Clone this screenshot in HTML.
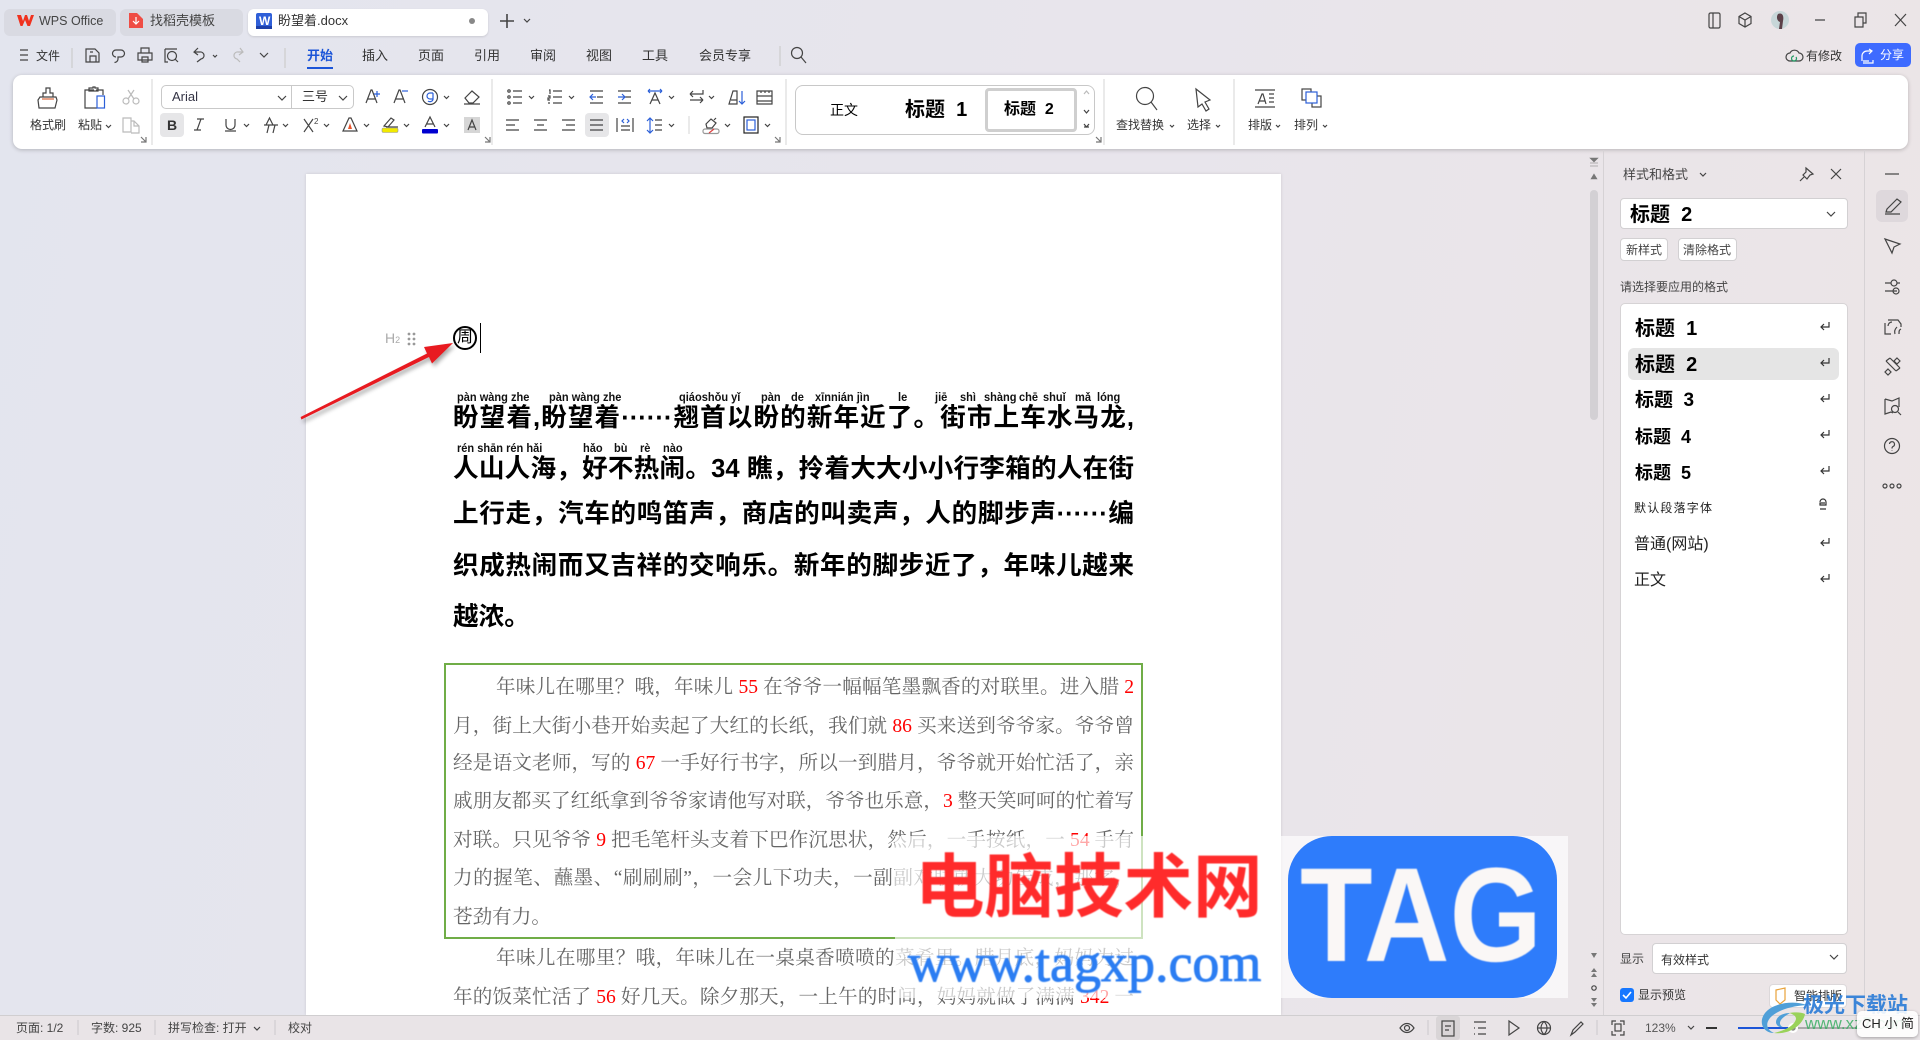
<!DOCTYPE html>
<html lang="zh-CN"><head><meta charset="utf-8"><title>盼望着.docx - WPS Office</title>
<style>
html,body{margin:0;padding:0;width:1920px;height:1040px;overflow:hidden}
body{position:relative;background:linear-gradient(100deg,#e3e5ee 0%,#e8e5ec 55%,#ece5e6 100%);font-family:"Liberation Sans","Noto Sans CJK SC",sans-serif;color:#333;font-size:12px}
.t{position:absolute;white-space:nowrap;line-height:20px}
.b{position:absolute;box-sizing:border-box}
.tab{position:absolute;top:9px;height:27px;border-radius:6px;background:#d9dae2}
.m{font-size:13px;top:46px;color:#333}
.l{top:115px;color:#333}
.h{font-family:"Liberation Sans","Noto Sans CJK SC",sans-serif;font-weight:700;color:#000}
.j{position:absolute;left:453px;width:681px;text-align:justify;text-align-last:justify;white-space:nowrap;font-weight:700;color:#000;font-size:25.6px;line-height:40px;height:40px;font-family:"Liberation Sans","Noto Sans CJK SC",sans-serif}
.s{position:absolute;left:453px;width:681px;text-align:justify;text-align-last:justify;white-space:nowrap;color:#666;font-size:19.6px;line-height:30px;height:30px;font-family:"Liberation Serif","Noto Serif CJK SC",serif}
.s i{font-style:normal;color:#f00}
.p{position:absolute;font-size:11.5px;font-weight:700;color:#111;line-height:14px;white-space:nowrap;font-family:"Liberation Sans",sans-serif;transform:scaleX(.96);transform-origin:left}
.st{top:1018px;color:#444;font-size:12px}
svg{position:absolute;left:0;top:0}
</style></head><body>

<!-- title tabs -->
<div class="tab" style="left:4px;width:112px"></div>
<div class="tab" style="left:120px;width:123px"></div>
<div class="tab" style="left:248px;width:240px;background:#fff;box-shadow:0 1px 2px rgba(0,0,0,.12)"></div>
<div class="t" style="left:39px;top:11px;font-size:12.5px;color:#444">WPS Office</div>
<div class="t" style="left:150px;top:11px;font-size:13px;color:#444">找稻壳模板</div>
<div class="t" style="left:278px;top:11px;font-size:13px;color:#333">盼望着.docx</div>

<!-- menu -->
<div class="t m" style="left:36px;font-size:12px">文件</div>
<div class="t m" style="left:307px;color:#1c55d8;font-weight:700">开始</div>
<div class="b" style="left:307px;top:67px;width:26px;height:2px;background:#1c55d8"></div>
<div class="t m" style="left:362px">插入</div>
<div class="t m" style="left:418px">页面</div>
<div class="t m" style="left:474px">引用</div>
<div class="t m" style="left:530px">审阅</div>
<div class="t m" style="left:586px">视图</div>
<div class="t m" style="left:642px">工具</div>
<div class="t m" style="left:699px">会员专享</div>
<div class="t" style="left:1806px;top:46px;font-size:12px">有修改</div>
<div class="b" style="left:1855px;top:43px;width:56px;height:24px;background:#3e6bff;border-radius:5px"></div>
<div class="t" style="left:1880px;top:45px;font-size:12px;color:#fff">分享</div>

<!-- ribbon -->
<div class="b" style="left:13px;top:75px;width:1895px;height:74px;background:#fff;border-radius:9px;box-shadow:0 1px 4px rgba(0,0,0,.22)"></div>
<div class="t l" style="left:30px;font-size:12px">格式刷</div>
<div class="t l" style="left:78px">粘贴</div>
<div class="b" style="left:161px;top:85px;width:193px;height:24px;border:1px solid #c9c9c9;border-radius:5px"></div>
<div class="b" style="left:291px;top:85px;width:1px;height:24px;background:#c9c9c9"></div>
<div class="t" style="left:172px;top:87px;color:#334;font-size:13px">Arial</div>
<div class="t" style="left:302px;top:87px;color:#333;font-size:13px">三号</div>
<div class="b" style="left:160px;top:113px;width:24px;height:24px;background:#e6e6e8;border-radius:4px"></div>
<div class="t" style="left:167px;top:115px;font-weight:700;font-size:14px">B</div>
<div class="b" style="left:585px;top:113px;width:24px;height:24px;background:#e6e6e8;border-radius:4px"></div>

<!-- gallery -->
<div class="b" style="left:795px;top:85px;width:300px;height:50px;border:1px solid #c8c8c8;border-radius:8px"></div>
<div class="b" style="left:985px;top:88px;width:92px;height:44px;border:3px solid #cfcfcf;border-radius:4px"></div>
<div class="t" style="left:830px;top:100px;font-size:14px;color:#000">正文</div>
<div class="t h" style="left:905px;top:100px;font-size:20px">标题&nbsp;&nbsp;1</div>
<div class="t h" style="left:1004px;top:100px;font-size:16px">标题&nbsp;&nbsp;2</div>
<div class="t l" style="left:1116px">查找替换</div>
<div class="t l" style="left:1187px">选择</div>
<div class="t l" style="left:1248px">排版</div>
<div class="t l" style="left:1294px">排列</div>

<!-- page -->
<div class="b" style="left:306px;top:174px;width:975px;height:841px;background:#fff;box-shadow:0 0 3px rgba(0,0,0,.12)"></div>
<div class="t" style="left:385px;top:328px;font-size:14px;color:#aaa">H<span style="font-size:9px">2</span></div>
<svg width="1920" height="1040" viewBox="0 0 1920 1040" fill="#999"><circle cx="409" cy="334" r="1.400"/><circle cx="414" cy="334" r="1.400"/><circle cx="409" cy="339" r="1.400"/><circle cx="414" cy="339" r="1.400"/><circle cx="409" cy="344" r="1.400"/><circle cx="414" cy="344" r="1.400"/></svg>

<div class="b" style="left:453px;top:326px;width:24px;height:24px;border:2px solid #000;border-radius:50%"></div>
<div class="t h" style="left:457px;top:328px;font-size:16px;line-height:20px;font-weight:400">周</div>
<div class="b" style="left:480px;top:323px;width:1px;height:30px;background:#000"></div>

<div class="p" style="left:457px;top:391px">pàn wàng zhe</div>
<div class="p" style="left:549px;top:391px">pàn wàng zhe</div>
<div class="p" style="left:679px;top:391px">qiáoshǒu yǐ</div>
<div class="p" style="left:761px;top:391px">pàn</div>
<div class="p" style="left:791px;top:391px">de</div>
<div class="p" style="left:815px;top:391px">xīnnián jìn</div>
<div class="p" style="left:898px;top:391px">le</div>
<div class="p" style="left:935px;top:391px">jiē</div>
<div class="p" style="left:960px;top:391px">shì</div>
<div class="p" style="left:984px;top:391px">shàng</div>
<div class="p" style="left:1019px;top:391px">chē</div>
<div class="p" style="left:1043px;top:391px">shuǐ</div>
<div class="p" style="left:1075px;top:391px">mǎ</div>
<div class="p" style="left:1097px;top:391px">lóng</div>
<div class="p" style="left:457px;top:442px">rén shān rén hǎi</div>
<div class="p" style="left:583px;top:442px">hǎo</div>
<div class="p" style="left:614px;top:442px">bù</div>
<div class="p" style="left:640px;top:442px">rè</div>
<div class="p" style="left:663px;top:442px">nào</div>

<div class="j" style="top:398px">盼望着,盼望着······翘首以盼的新年近了。街市上车水马龙,</div>
<div class="j" style="top:449px">人山人海，好不热闹。34 瞧，拎着大大小小行李箱的人在街</div>
<div class="j" style="top:494px">上行走，汽车的鸣笛声，商店的叫卖声，人的脚步声······编</div>
<div class="j" style="top:546px">织成热闹而又吉祥的交响乐。新年的脚步近了，年味儿越来</div>
<div class="j" style="top:597px;width:auto;text-align-last:left">越浓。</div>

<div class="b" style="left:444px;top:663px;width:699px;height:276px;border:2px solid #70ad47"></div>
<div class="s" style="top:673px;left:496px;width:638px">年味儿在哪里？哦，年味儿 <i>55</i> 在爷爷一幅幅笔墨飘香的对联里。进入腊 <i>2</i></div>
<div class="s" style="top:712px">月，街上大街小巷开始卖起了大红的长纸，我们就 <i>86</i> 买来送到爷爷家。爷爷曾</div>
<div class="s" style="top:749px">经是语文老师，写的 <i>67</i> 一手好行书字，所以一到腊月，爷爷就开始忙活了，亲</div>
<div class="s" style="top:787px">戚朋友都买了红纸拿到爷爷家请他写对联，爷爷也乐意，<i>3</i> 整天笑呵呵的忙着写</div>
<div class="s" style="top:826px">对联。只见爷爷 <i>9</i> 把毛笔杆头支着下巴作沉思状，然后，一手按纸，一 <i>54</i> 手有</div>
<div class="s" style="top:864px">力的握笔、蘸墨、“刷刷刷”，一会儿下功夫，一副副对联就大功告成，那字，</div>
<div class="s" style="top:903px;width:auto;text-align-last:left">苍劲有力。</div>
<div class="s" style="top:944px;left:496px;width:638px">年味儿在哪里？哦，年味儿在一桌桌香喷喷的菜肴里。腊月底，妈妈为过</div>
<div class="s" style="top:983px">年的饭菜忙活了 <i>56</i> 好几天。除夕那天，一上午的时间，妈妈就做了满满 <i>342</i> 一</div>

<!-- status bar -->
<div class="b" style="left:0;top:1015px;width:1920px;height:25px;background:#e9e4e7;border-top:1px solid #d0ced0"></div>
<div class="t st" style="left:16px">页面: 1/2</div>
<div class="t st" style="left:91px">字数: 925</div>
<div class="t st" style="left:168px">拼写检查: 打开</div>
<div class="t st" style="left:288px">校对</div>
<div class="t st" style="left:1645px;color:#555">123%</div>
<div class="b" style="left:1436px;top:1016px;width:24px;height:24px;background:#d9d5d7;border-radius:3px"></div>

<!-- side panel -->
<div class="b" style="left:1603px;top:150px;width:1px;height:865px;background:#d6d2d5"></div>
<div class="b" style="left:1864px;top:150px;width:1px;height:865px;background:#d6d2d5"></div>
<div class="b" style="left:1590px;top:190px;width:8px;height:230px;background:#d3d0d4;border-radius:4px"></div>
<div class="t" style="left:1623px;top:165px;font-size:13px;color:#444">样式和格式</div>
<div class="b" style="left:1620px;top:198px;width:228px;height:31px;background:#fff;border:1px solid #d2d0d2;border-radius:4px"></div>
<div class="t h" style="left:1630px;top:205px;font-size:20px">标题&nbsp; 2</div>
<div class="b" style="left:1620px;top:238px;width:48px;height:23px;background:#fff;border:1px solid #d2d0d2;border-radius:4px"></div>
<div class="t" style="left:1626px;top:240px;color:#444">新样式</div>
<div class="b" style="left:1678px;top:238px;width:59px;height:23px;background:#fff;border:1px solid #d2d0d2;border-radius:4px"></div>
<div class="t" style="left:1683px;top:240px;color:#444">清除格式</div>
<div class="t" style="left:1620px;top:277px;color:#444">请选择要应用的格式</div>
<div class="b" style="left:1620px;top:303px;width:228px;height:632px;background:#fff;border:1px solid #d6d3d5;border-radius:5px"></div>
<div class="b" style="left:1628px;top:348px;width:211px;height:32px;background:#e5e5e5;border-radius:6px"></div>
<div class="t h" style="left:1635px;top:319px;font-size:20px">标题&nbsp; 1</div>
<div class="t h" style="left:1635px;top:355px;font-size:20px">标题&nbsp; 2</div>
<div class="t h" style="left:1635px;top:391px;font-size:19px">标题&nbsp; 3</div>
<div class="t h" style="left:1635px;top:427px;font-size:18px">标题&nbsp; 4</div>
<div class="t h" style="left:1635px;top:463px;font-size:18px">标题&nbsp; 5</div>
<div class="t" style="left:1634px;top:498px;font-size:12px;letter-spacing:1.2px;color:#222">默认段落字体</div>
<div class="t" style="left:1634px;top:535px;font-size:16px;color:#222">普通(网站)</div>
<div class="t" style="left:1634px;top:571px;font-size:16px;color:#222">正文</div>
<div class="t" style="left:1620px;top:949px;color:#444">显示</div>
<div class="b" style="left:1652px;top:943px;width:195px;height:31px;background:#fff;border:1px solid #d2d0d2;border-radius:4px"></div>
<div class="t" style="left:1661px;top:950px;color:#333">有效样式</div>
<div class="b" style="left:1620px;top:988px;width:14px;height:14px;background:#1677ff;border-radius:3px"></div>
<div class="t" style="left:1638px;top:985px;color:#333">显示预览</div>
<div class="b" style="left:1769px;top:984px;width:78px;height:24px;background:#fff;border:1px solid #dcd8da;border-radius:4px"></div>
<div class="t" style="left:1794px;top:986px;color:#333">智能排版</div>

<!-- icons -->
<svg width="1920" height="1040" viewBox="0 0 1920 1040" fill="none" stroke="#444" stroke-width="1.2">
<!-- tab icons -->
<path d="M17 15h4l2 6 2-6h2l2 6 2-6h3l-4 11h-2.500l-2.500-6-2.500 6h-2z" fill="#f0321f" stroke="none"/>
<path d="M129 13h8l6 6v9h-14z" fill="#ef4d45" stroke="none"/><path d="M136 17v7m-3-3l3 3 3-3" stroke="#fff"/>
<rect x="256" y="13" width="16" height="16" rx="2" fill="#2f5fd8" stroke="none"/><text x="259" y="25" font-size="12" font-weight="700" fill="#fff" stroke="none" font-family="Liberation Sans">W</text>
<rect x="256" y="26" width="16" height="3" fill="#1c3fa8" stroke="none"/>
<circle cx="472" cy="21" r="3" fill="#888" stroke="none"/>
<path d="M500 21h14M507 14v14" stroke="#444" stroke-width="1.6"/><path d="M524 19l3 3 3-3"/>
<!-- window controls -->
<rect x="1709" y="13" width="11" height="15" rx="1.5"/><path d="M1713 13v15"/>
<path d="M1745 13l6 3.500v7l-6 3.500-6-3.500v-7zM1739 16.500l6 3.500 6-3.500M1745 20v7"/>
<circle cx="1780" cy="20" r="9" fill="#c7d6d8" stroke="none"/><path d="M1778 14c5-2 6 3 5 7l-1 8h-3l1-7c-3-1-4-5-2-8z" fill="#5b4048" stroke="none"/>
<path d="M1815 20h10M1855 17h8v10h-8zM1858 17v-4h8v10h-3M1895 14l11 12M1906 14l-11 12"/>
<!-- menu icons -->
<path d="M20 50h8M20 55h8M20 60h8"/><path d="M72 48v20M285 48v20M780 46v20" stroke="#ccc"/>
<path d="M86 49h9l4 4v9H86zM90 62v-6h6v6M90 52h3"/>
<path d="M116 57a3.500 3.500 0 0 1 0-7h5a3.500 3.500 0 0 1 0 7h-3v2a3.500 3.500 0 0 1-3.500 3.500"/>
<path d="M141 53v-5h8v5M138 53h14v7h-14zM142 57h6v5h-6z"/>
<path d="M165 49h12M165 49v13h3"/><circle cx="172" cy="56" r="4.500"/><path d="M175 59l3 3"/>
<path d="M198 48l-4 4 4 3M194 52h6a3.500 3.500 0 0 1 1 7l-4 3"/><path d="M213 55l2 2 2-2"/>
<g stroke="#bbb"><path d="M240 48l3 4-4 3M243 52h-5a3.500 3.500 0 0 0-1 7l3 3"/></g><path d="M260 53l4 4 4-4"/>
<circle cx="797" cy="53" r="5.500"/><path d="M801 57l5 6"/>
<path d="M1790 61a4 4 0 0 1 0-8 5 5 0 0 1 9 0 4 4 0 0 1 0 8z"/><path d="M1794 56a2.500 2.500 0 1 0 2 1" stroke="#1f9a62"/>
<path d="M1863 61h6M1862 61v-5a5 5 0 0 1 5-5h5M1869 49l3 2-3 3M1873 60v3h-10" stroke="#fff"/>
<!-- ribbon separators -->
<path d="M152 79v66M492 79v66M786 79v66M1104 79v66M1234 79v66M689 116v18" stroke="#dcdcdc"/>
<!-- format painter -->
<path d="M43 97v-4h3v-5h4v5h3v4M40 97h16l1 3-2 8H39l-1-8z"/><path d="M42 99h12" stroke="#d9663c"/>
<!-- paste -->
<path d="M94 90h-9v18h12M96 90h7v5M89 90v-2h4v-1h2v1h3v3h-9z"/><rect x="97" y="96" width="7.500" height="12" stroke="#2b5fd8"/>
<g stroke="#bbb"><circle cx="126" cy="101" r="3"/><circle cx="136" cy="101" r="3"/><path d="M128 99l6-9M134 99l-6-9"/></g>
<g stroke="#bbb"><path d="M123 118h8v14h-8zM131 121h3l5 5v7h-8M134 121v5h5"/></g>
<path d="M106 125l2.500 2.500 2.500-2.500"/>
<path d="M278 96l4 4 4-4M339 96l4 4 4-4"/>
<!-- font commands -->
<path d="M366 103l5-13h1l5 13M368 99h8"/><path d="M374 94h6M377 91v6" stroke="#2b5fd8"/>
<path d="M394 103l5-13h1l5 13M396 99h8"/><path d="M402 91h6" stroke="#2b5fd8"/>
<circle cx="430" cy="97" r="7.500"/><path d="M433 93h-3a3 3 0 0 0 0 6h3v-6M433 99c0 3-4 3-5 2" stroke="#2b5fd8"/>
<path d="M444 96l2.500 2.500 2.500-2.500M529 96l2.500 2.500 2.500-2.500M569 96l2.500 2.500 2.500-2.500M669 96l2.500 2.500 2.500-2.500M709 96l2.500 2.500 2.500-2.500"/>
<path d="M465 98l7-7 7 6-6 6h-4zM464 104h16"/>
<path d="M197 119h7M201 119l-4 11M194 130h7"/>
<path d="M226 119v6a4.500 4.500 0 0 0 9 0v-6M225 131h11"/><path d="M244 124l2.500 2.500 2.500-2.500M283 124l2.500 2.500 2.500-2.500M324 124l2.500 2.500 2.500-2.500M364 124l2.500 2.500 2.500-2.500M404 124l2.500 2.500 2.500-2.500M444 124l2.500 2.500 2.500-2.500M669 124l2.500 2.500 2.500-2.500M725 124l2.500 2.500 2.500-2.500M765 124l2.500 2.500 2.500-2.500"/>
<path d="M266 125l3.500-7 3.500 7M264 125h14M267 133l2-8M273 133l2-8"/>
<path d="M304 119l9 13M313 119l-9 13"/><text x="314" y="124" font-size="8" fill="#444" stroke="none" font-family="Liberation Sans">2</text>
<path d="M343 131l6-13h2l6 13zM346 131h8"/><path d="M348 129h4l-2-6z" fill="#e8552c" stroke="none"/>
<path d="M384 126l7-8 3 2-6 7zM386 127h12"/><rect x="382" y="128" width="16" height="4.500" rx="1.500" fill="#f2ea00" stroke="#999" stroke-width=".6"/>
<path d="M425 127l5-10 5 10M427 124h6"/><rect x="422" y="129" width="16" height="4.500" rx="1" fill="#0000d0" stroke="none"/>
<rect x="464" y="117" width="16" height="16" fill="#d6d6d6" stroke="none"/><path d="M468 130l4-10 4 10M469 127h6"/>
<!-- paragraph row1 -->
<circle cx="509" cy="91" r="1.200"/><circle cx="509" cy="97" r="1.200"/><circle cx="509" cy="103" r="1.200"/><path d="M513 91h9M513 97h9M513 103h9"/>
<path d="M549 90h1v4M548 96h2v2h-2v2h2M548 103h2M553 91h9M553 97h9M553 103h9"/>
<path d="M590 91h13M597 97h6M590 103h13"/><path d="M596 97h-6m3-3l-3 3 3 3" stroke="#2b5fd8"/>
<path d="M618 91h13M625 97h6M618 103h13"/><path d="M618 97h7m-3-3l3 3-3 3" stroke="#2b5fd8"/>
<path d="M650 104l5-11 5 11M652 100h6"/><path d="M648 91h14M648 91l2-2M648 91l2 2M662 91l-2-2M662 91l-2 2" stroke="#2b5fd8"/>
<path d="M690 94h13v-4M690 94l3-3M690 94l3 3M703 100h-13M703 100l-3-3M703 100l-3 3"/>
<path d="M729 104l4-13h4v13zM731 100h6M729 104h8"/><path d="M742 91v13m-3-3l3 3 3-3" stroke="#2b5fd8"/>
<path d="M757 91h15v13h-15zM757 96h15M757 101h15M761 91v2M765 91v2M769 91v2"/>
<!-- paragraph row2 -->
<path d="M506 120h13M506 125h9M506 130h13"/><path d="M534 120h13M537 125h7M534 130h13"/><path d="M562 120h13M566 125h9M562 130h13"/><path d="M590 120h13M590 125h13M590 130h13"/>
<path d="M617 118v14M633 118v14M621 126h9M621 130h9"/><path d="M624 119l-2 2 2 2M627 119l2 2-2 2" stroke="#2b5fd8"/>
<path d="M650 118v15m-3-12l3-3 3 3m-6 9l3 3 3-3" stroke="#2b5fd8"/><path d="M655 120h7M655 125h7M655 130h7"/>
<path d="M706 124l5-5 5 4-4 5h-5zM714 120l2-2"/><rect x="703" y="129" width="16" height="4.500" rx="2" stroke="#999"/><path d="M709 133l5-4" stroke="#d44"/>
<rect x="744" y="117" width="14" height="16" stroke="#222"/><rect x="747" y="120" width="8" height="10" stroke="#2b5fd8"/>
<g stroke="#777"><path d="M141 142h5v-5M141 137l5 5M485 142h5v-5M485 137l5 5M775 142h5v-5M775 137l5 5M1096 142h5v-5M1096 137l5 5"/></g>
<!-- gallery arrows -->
<path d="M1084 94l2.500-3 2.500 3" stroke="#bbb"/><path d="M1084 110l2.500 3 2.500-3M1084 124l2.500 3 2.500-3M1084 127h5"/>
<!-- right ribbon -->
<circle cx="1145" cy="96" r="8.500"/><path d="M1151 102l6 8"/>
<path d="M1196 89l14 11-5 2 4 7-3 2-4-7-4 3z"/>
<path d="M1170 125l2 2 2-2M1216 125l2 2 2-2M1276 125l2 2 2-2M1323 125l2 2 2-2"/>
<path d="M1255 90h20M1255 107h20M1258 104l4-10h1l3 10M1259 101h6M1269 94h5M1269 98h5M1269 102h5"/>
<rect x="1302" y="89" width="9" height="11"/><rect x="1312" y="96" width="9" height="11"/><rect x="1306" y="92" width="11" height="11" stroke="#2b5fd8" fill="#fff"/>
<!-- scroll controls -->
<path d="M1590 158h8l-4 4zM1590 163h8M1590 166h8M1594 174l3 5h-6z" fill="#777" stroke="#777" stroke-width=".6"/>
<path d="M1591 953h6l-3 5zM1594 968l3 4h-6zM1594 973l3 4h-6zM1591 998h6l-3 4zM1591 1003h6l-3 4z" fill="#777" stroke="none"/>
<circle cx="1594" cy="988" r="2.200"/>
<!-- panel icons -->
<path d="M1700 173l3 3 3-3"/>
<path d="M1806 168l7 6-3 1-3 4-4-4 3-3zM1804 177l-4 4"/>
<path d="M1831 169l10 10M1841 169l-10 10"/>
<path d="M1827 212l4 4 4-4"/>
<g stroke="#333"><path d="M1829 322v5h-8m3-3l-3 3 3 3M1829 358v5h-8m3-3l-3 3 3 3M1829 394v5h-8m3-3l-3 3 3 3M1829 430v5h-8m3-3l-3 3 3 3M1829 466v5h-8m3-3l-3 3 3 3M1829 538v5h-8m3-3l-3 3 3 3M1829 574v5h-8m3-3l-3 3 3 3"/><path d="M1820 502a3 3 0 0 1 6 0v3h-6v-2h5M1820 509h6"/></g>
<path d="M1830 955l4 4 4-4"/>
<path d="M1623 995l3 3 5-6" stroke="#fff" stroke-width="1.600"/>
<path d="M1776 990l9-2v12l-5 4-4-4z" stroke="#e9a23a"/>
<!-- right strip -->
<rect x="1876" y="190" width="32" height="32" rx="6" fill="#ded8dc" stroke="none"/>
<path d="M1885 174h14"/><path d="M1887 209l10-10 4 3-10 10h-5zM1885 214h15"/>
<path d="M1885 239l15 5-6 3-2 6z"/>
<path d="M1885 283h6M1897 283h3M1885 291h12"/><circle cx="1894" cy="283" r="3"/><circle cx="1896" cy="291" r="3"/>
<path d="M1888 320h10l3 4v3M1885 323v11h6M1892 322a4 4 0 0 0-4 4M1895 334c-1-3 0-5 2-7M1899 334c0-3 0-4 2-5"/>
<path d="M1886 361l10 10M1890 358l10 10M1886 361l4-3M1896 371l4-3M1897 358l3 3-3 3-3-3zM1888 369l3 3-3 3-3-3z"/>
<path d="M1885 399l7 2 7-3v9M1885 399v15l6-2 2 1"/><circle cx="1895" cy="409" r="3.500"/><path d="M1898 412l3 3"/>
<circle cx="1892" cy="446" r="7.500"/><path d="M1889.500 444a2.500 2.500 0 1 1 3.500 2.500c-1 .5-1 1-1 2M1892 450.500v.5"/>
<circle cx="1885" cy="486" r="2"/><circle cx="1892" cy="486" r="2"/><circle cx="1899" cy="486" r="2"/>
<!-- status icons -->
<path d="M78 1020v15M155 1020v15M275 1020v15M1428 1020v15M1597 1020v15" stroke="#d0cdd0"/>
<path d="M254 1027l3 3 3-3M1688 1026l3 3 3-3"/>
<path d="M1400 1028c4-6 10-6 14 0-4 6-10 6-14 0z"/><circle cx="1407" cy="1028" r="2.500"/>
<rect x="1442" y="1021" width="12" height="15"/><path d="M1445 1026h6M1445 1030h4"/>
<path d="M1474 1022h12M1478 1028h8M1478 1034h8M1474 1028h1M1474 1034h1"/>
<path d="M1509 1021l10 7-10 7z"/><circle cx="1544" cy="1028" r="6.500"/><path d="M1537.500 1028h13M1544 1021.500c-4 4-4 9 0 13M1544 1021.500c4 4 4 9 0 13"/>
<path d="M1571 1035l2-5 8-8 2 2-8 8z"/>
<path d="M1612 1025v-4h4M1620 1021h4v4M1624 1031v4h-4M1616 1035h-4v-4"/><rect x="1615" y="1024" width="6" height="7"/>
<path d="M1706 1028h11" stroke="#333" stroke-width="2"/><path d="M1738 1028h52" stroke="#1c55d8" stroke-width="2"/><path d="M1798 1028h60" stroke="#aaa" stroke-width="2"/>
<circle cx="1793" cy="1028" r="5" fill="#fff" stroke="none"/><circle cx="1793" cy="1028" r="2.700" fill="#888" stroke="none"/>
</svg>

<!-- arrow -->
<svg width="1920" height="1040" viewBox="0 0 1920 1040" style="filter:drop-shadow(2px 3px 2px rgba(0,0,0,.35))">
<path d="M300.600 417L427 353.500L424 347L453 343L432 363.500L429 357L301.400 419.500z" fill="#e81a20"/>
</svg>

<!-- watermark -->
<div class="b" style="left:895px;top:836px;width:673px;height:162px;background:rgba(255,255,255,.66)"></div>
<div class="t" style="left:915px;top:845px;font-size:69.500px;line-height:74px;font-weight:700;color:#ff2b2b;filter:blur(.5px);font-family:'Noto Sans CJK SC',sans-serif">电脑技术网</div>
<div class="t" style="left:908px;top:934px;font-size:54px;line-height:58px;color:#2b7df2;-webkit-text-stroke:.9px #2b7df2;filter:blur(.5px);font-family:'Liberation Serif',serif">www.tagxp.com</div>
<div class="b" style="left:1288px;top:836px;width:269px;height:162px;background:#2e7cfb;border-radius:44px"></div>
<svg width="1920" height="1040" viewBox="0 0 1920 1040"><text x="1300" y="961" font-size="134" font-weight="700" font-family="Liberation Sans,sans-serif" fill="#faf7f6" textLength="242" lengthAdjust="spacingAndGlyphs" style="filter:blur(.5px)">TAG</text></svg>

<!-- corner watermark -->
<svg width="1920" height="1040" viewBox="0 0 1920 1040">
<path d="M1807 1005c-14-5-34-2-42 8-7 9-2 20 9 20-7-3-9-9-4-15 6-7 20-12 37-13z" fill="#4f9fd8"/>
<path d="M1790 1013c-8 0-14 4-14 9 0 3 3 6 7 5-3-1-4-4-2-7 2-3 6-5 9-7z" fill="#4f9fd8"/>
<path d="M1805 1014c-2 11-16 21-31 19 8-2 20-6 22-14 0-3-3-5-7-6 6-1 12-1 16 1z" fill="#9ad25a"/>
</svg>
<div class="t" style="left:1803px;top:994px;font-size:21px;line-height:24px;font-weight:700;color:rgba(45,125,215,.92)">极光下载站</div>
<div class="t" style="left:1805px;top:1014px;font-size:17px;color:rgba(60,175,100,.85)">www.xz7.com</div>
<div class="b" style="left:1857px;top:1011px;width:61px;height:26px;background:rgba(255,255,255,.88);border-radius:5px;box-shadow:0 1px 3px rgba(0,0,0,.3)"></div>
<div class="t" style="left:1862px;top:1014px;font-size:13px;color:#222">CH 小 简</div>
</body></html>
